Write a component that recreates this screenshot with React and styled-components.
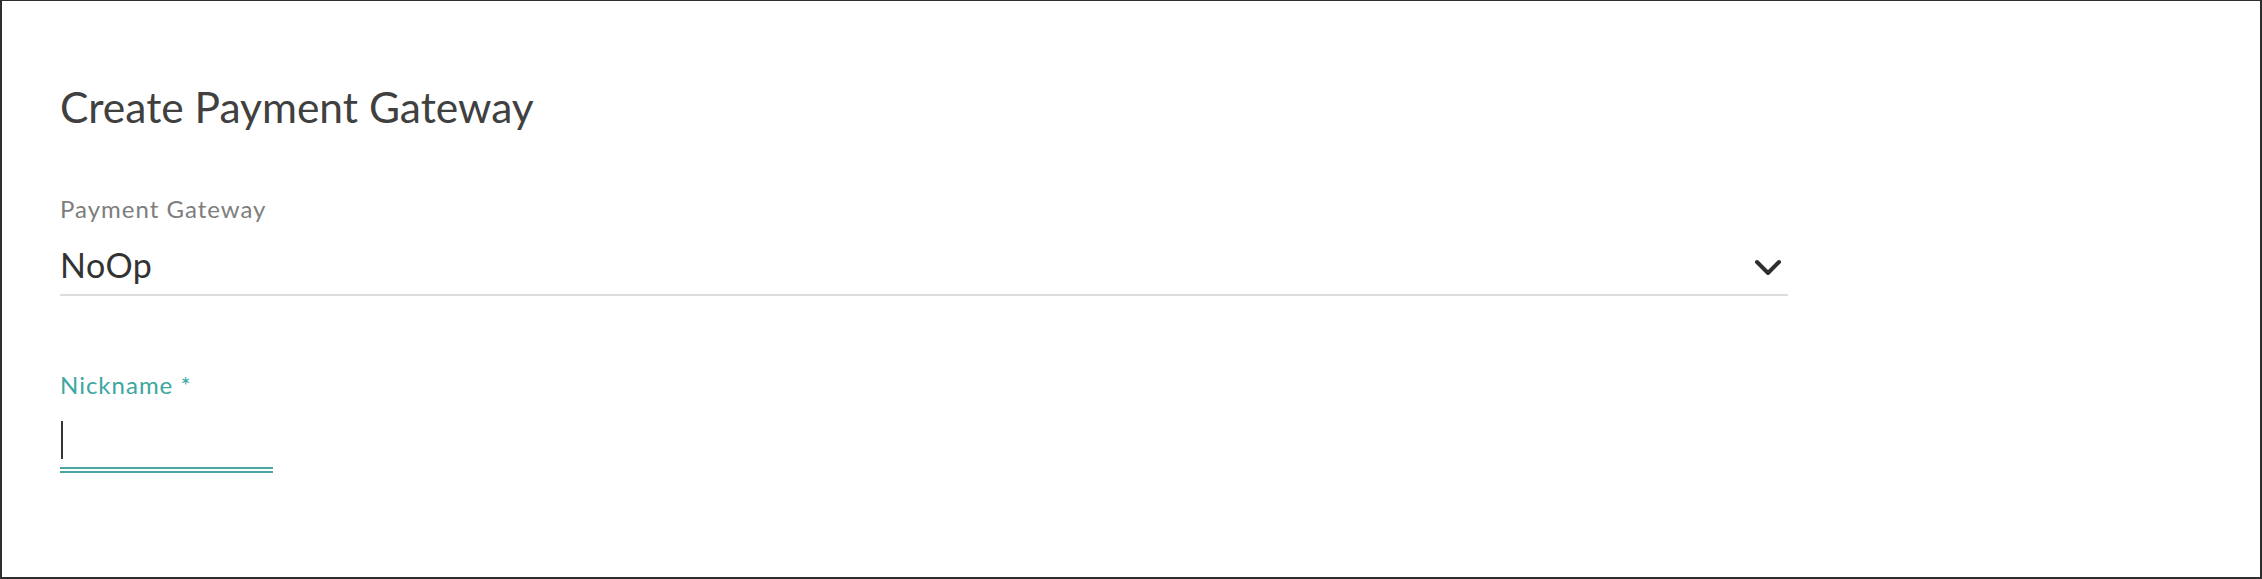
import React from "react";
import styled, { createGlobalStyle } from "styled-components";

const GlobalStyle = createGlobalStyle`
  html, body { margin: 0; padding: 0; background: #fff; }
  * { box-sizing: border-box; }
`;

const Frame = styled.div`
  width: 2262px;
  height: 579px;
  border-style: solid;
  border-color: #2e2e2e;
  border-width: 1px 2px 2px 2px;
  background: #fff;
  padding: 80px 0 0 58px;
  font-family: Lato, "Open Sans", sans-serif;
`;

const Title = styled.h1`
  margin: 0;
  font-size: 42.5px;
  font-weight: 400;
  line-height: 52px;
  color: #404040;
`;

const Form = styled.div`
  display: flex;
  flex-direction: column;
  gap: 76px;
  margin-top: 63px;
  width: 1728px;
`;

const Field = styled.div`
  display: flex;
  flex-direction: column;
  width: ${(p) => p.$width || "100%"};
`;

const Label = styled.label`
  font-size: 24px;
  line-height: 26px;
  letter-spacing: 1px;
  color: ${(p) => (p.$active ? "#3ca6a0" : "#7d7d7d")};
`;

const SelectRow = styled.div`
  display: flex;
  align-items: center;
  justify-content: space-between;
  height: 74px;
  padding: 12px 6px 0 0;
  border-bottom: 2px solid #dcdcdc;
`;

const Value = styled.span`
  font-size: 34px;
  letter-spacing: 0.5px;
  color: #333;
`;

const ChevronBox = styled.span`
  display: flex;
  margin-top: 8px;
`;

const InputRow = styled.div`
  height: 75px;
  padding-top: 15px;
  display: flex;
  align-items: center;
  border-bottom: 6px double #4aa79f;
`;

const Caret = styled.span`
  width: 2px;
  height: 38px;
  background: #333;
  margin-left: 1px;
`;

const Chevron = () => (
  <ChevronBox>
    <svg width="28" height="18" viewBox="0 0 28 18" fill="none">
      <path d="M3 3 L14 14 L25 3" stroke="#2f2f2f" strokeWidth="4" strokeLinecap="round" strokeLinejoin="round" />
    </svg>
  </ChevronBox>
);

export default function App() {
  return (
    <>
      <GlobalStyle />
      <Frame>
        <Title>Create Payment Gateway</Title>
        <Form>
          <Field>
            <Label>Payment Gateway</Label>
            <SelectRow>
              <Value>NoOp</Value>
              <Chevron />
            </SelectRow>
          </Field>
          <Field $width="213px">
            <Label $active>Nickname *</Label>
            <InputRow>
              <Caret />
            </InputRow>
          </Field>
        </Form>
      </Frame>
    </>
  );
}
